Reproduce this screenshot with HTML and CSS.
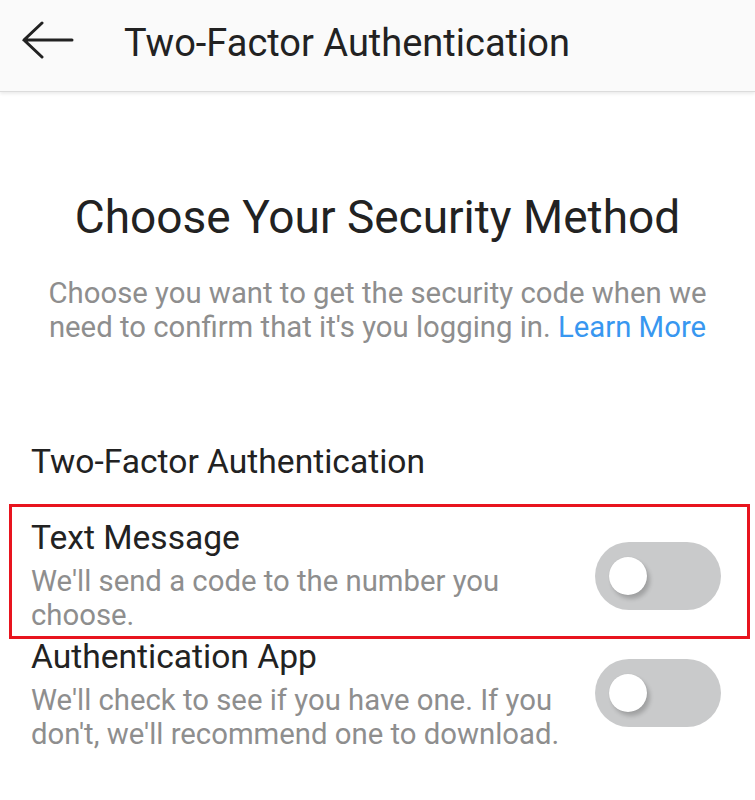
FILE: index.html
```html
<!DOCTYPE html>
<html>
<head>
<meta charset="utf-8">
<link rel="stylesheet" href="styles.css">
</head>
<body>
<header class="appbar">
  <svg class="back" width="54" height="40" viewBox="0 0 54 40">
    <path d="M51 19H3M21 2L3 19L21 36" fill="none" stroke="#222" stroke-width="3" stroke-linecap="round" stroke-linejoin="miter"/>
  </svg>
  <h1 class="appbar-title">Two-Factor Authentication</h1>
</header>
<main class="content">
  <h2 class="heading">Choose Your Security Method</h2>
  <p class="intro">Choose you want to get the security code when we need to confirm that it's you logging in. <a class="link">Learn More</a></p>
  <div class="section-label">Two-Factor Authentication</div>
  <div class="option highlighted">
    <div class="option-text">
      <div class="option-title">Text Message</div>
      <div class="option-desc">We'll send a code to the number you choose.</div>
    </div>
    <div class="toggle"><span class="knob"></span></div>
  </div>
  <div class="option plain">
    <div class="option-text">
      <div class="option-title">Authentication App</div>
      <div class="option-desc">We'll check to see if you have one. If you don't, we'll recommend one to download.</div>
    </div>
    <div class="toggle"><span class="knob"></span></div>
  </div>
</main>
</body>
</html>
```
FILE: styles.css
```css
html, body {
  margin: 0;
  padding: 0;
  background: #ffffff;
  font-family: Roboto, "Liberation Sans", sans-serif;
  color: #222;
}
.appbar {
  height: 92px;
  background: #fafafa;
  display: flex;
  align-items: center;
  box-shadow: 0 2px 3px rgba(0,0,0,0.08);
  border-bottom: 1px solid #dcdcdc;
  box-sizing: border-box;
}
.back {
  margin-left: 21px;
  margin-top: -10px;
  flex: none;
}
.appbar-title {
  margin: -6px 0 0 49px;
  font-size: 38px;
  font-weight: 400;
  color: #222;
}
.heading {
  margin: 95px 0 0;
  text-align: center;
  font-size: 46px;
  font-weight: 400;
  color: #222;
  line-height: 60px;
}
.intro {
  margin: 29px 40px 0;
  text-align: center;
  font-size: 29.3px;
  line-height: 34px;
  color: #8e8e8e;
}
.link { color: #3897f0; text-decoration: none; }
.section-label {
  margin: 98px 0 0 31px;
  font-size: 33.6px;
  line-height: 40px;
  color: #222;
}
.option {
  display: flex;
  align-items: center;
  margin: 0 5px 0 9px;
  border: 3px solid transparent;
  padding: 0 26px 0 19px;
}
.option.highlighted {
  border-color: #e8141e;
  margin-top: 22px;
  padding-top: 13px;
  padding-bottom: 4px;
}
.option.plain {
  margin-top: -3px;
}
.option-text {
  flex: 1;
  max-width: 537px;
}
.option-title {
  font-size: 33.6px;
  line-height: 36px;
  color: #222;
}
.option-desc {
  margin-top: 8px;
  font-size: 29.3px;
  line-height: 34px;
  color: #8e8e8e;
}
.toggle {
  margin-left: auto;
  width: 126px;
  height: 68px;
  border-radius: 34px;
  background: #c9cacb;
  position: relative;
  flex: none;
}
.plain .toggle {
  margin-top: -4px;
}
.knob {
  position: absolute;
  left: 14px;
  top: 15px;
  width: 38px;
  height: 38px;
  border-radius: 50%;
  background: #fff;
  box-shadow: 3px 4px 4px rgba(0,0,0,0.2), 0 0 1px rgba(0,0,0,0.15);
}
```
